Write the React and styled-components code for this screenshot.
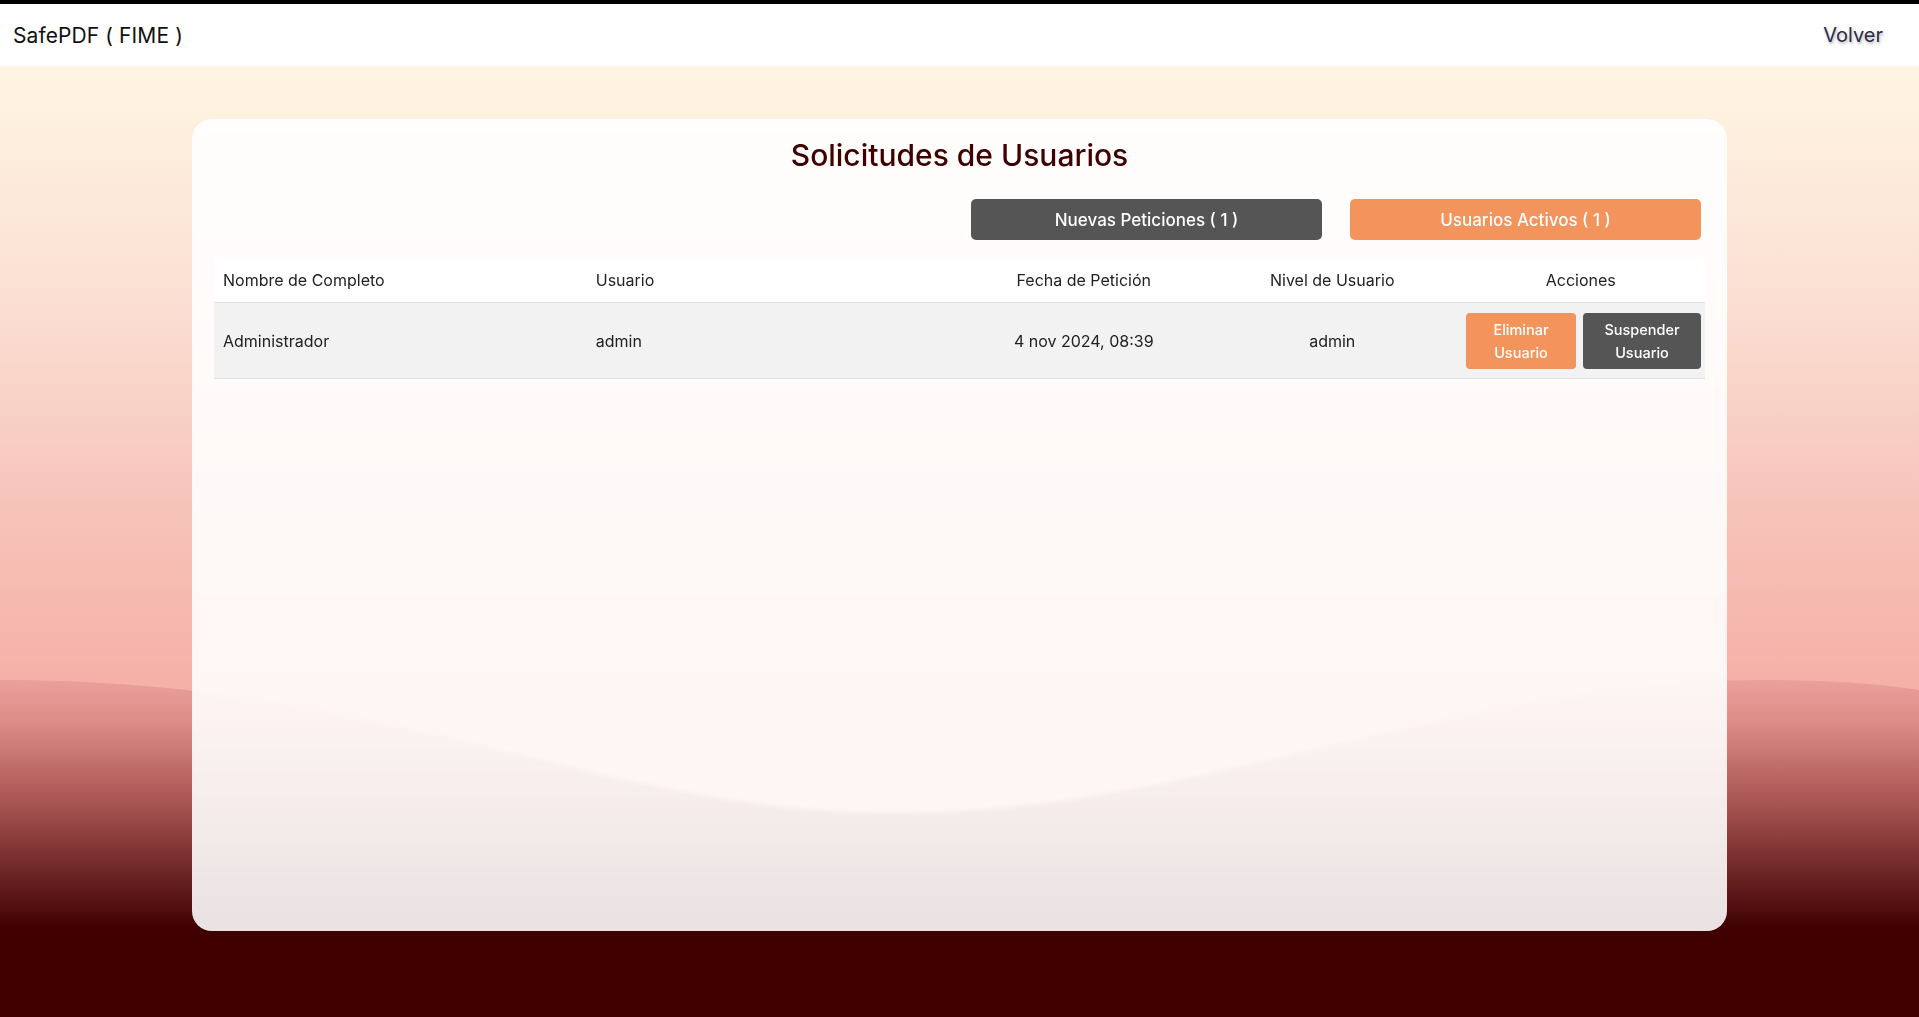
import React from 'react'
import styled, { createGlobalStyle } from 'styled-components'

const GlobalStyle = createGlobalStyle`
  html, body {
    margin: 0;
    padding: 0;
  }
  body {
    font-family: 'Inter', 'Noto Sans', sans-serif;
    border-top: 4px solid #000;
    background: #400000;
  }
  * {
    box-sizing: border-box;
  }
`

const Page = styled.div`
  position: relative;
  min-height: 1013px;
  display: flex;
  flex-direction: column;
  background: linear-gradient(180deg, #fef5e2 62px, #fbdfd2 300px, #f7c4ba 500px, #f5b0a7 680px);
  overflow: hidden;
`

const Wave = styled.svg`
  position: absolute;
  left: 0;
  bottom: 0;
  width: 100%;
  height: 337px;
  display: block;
`

const Navbar = styled.nav`
  position: relative;
  z-index: 2;
  height: 62px;
  background: #fff;
  display: flex;
  align-items: center;
  justify-content: space-between;
  padding: 0 36px 0 13px;
`

const Brand = styled.div`
  font-size: 21px;
  color: #111;
  letter-spacing: 0.1px;
`

const BackLink = styled.a`
  font-size: 20px;
  color: #2d2b4a;
  text-shadow: 1px 2px 3px rgba(0, 0, 0, 0.3);
  cursor: pointer;
`

const Main = styled.main`
  position: relative;
  z-index: 1;
  display: flex;
  justify-content: center;
  padding: 53px 192px 0;
`

const Card = styled.section`
  width: 100%;
  height: 812px;
  border-radius: 20px;
  background: rgba(255, 255, 255, 0.89);
  backdrop-filter: blur(2px);
  padding: 18px 22px;
  display: flex;
  flex-direction: column;
`

const Title = styled.h1`
  margin: 0;
  text-align: center;
  font-size: 30px;
  line-height: 36px;
  font-weight: 500;
  color: #400000;
`

const TabBar = styled.div`
  display: flex;
  justify-content: flex-end;
  gap: 28px;
  margin: 26px 4px 18px 0;
`

const TabButton = styled.button`
  width: 351px;
  height: 41px;
  border: none;
  border-radius: 5px;
  background: ${p => (p.$variant === 'orange' ? '#f2945c' : '#555555')};
  color: #fff;
  font-family: inherit;
  font-size: 17px;
  font-weight: 500;
  cursor: pointer;
`

const Table = styled.div`
  display: grid;
  grid-template-columns: 25% 25% 1fr 1fr 1fr;
`

const HeadCell = styled.div`
  background: #fff;
  height: 45px;
  display: flex;
  align-items: center;
  justify-content: ${p => (p.$center ? 'center' : 'flex-start')};
  padding: 0 9px;
  font-size: 16px;
  color: #222;
  border-bottom: 1px solid #dee2e6;
`

const Cell = styled.div`
  background: #f2f2f2;
  height: 76px;
  display: flex;
  align-items: center;
  justify-content: ${p => (p.$center ? 'center' : 'flex-start')};
  padding: 0 9px;
  font-size: 16px;
  color: #222;
  border-bottom: 1px solid #dee2e6;
`

const Actions = styled(Cell)`
  justify-content: flex-end;
  gap: 7px;
  padding: 0 4px 0 0;
`

const ActionButton = styled.button`
  width: ${p => p.$w}px;
  height: 56px;
  border: none;
  border-radius: 4px;
  background: ${p => (p.$variant === 'orange' ? '#f2945c' : '#555555')};
  color: #fff;
  font-family: inherit;
  font-size: 14.5px;
  font-weight: 500;
  line-height: 23px;
  padding: 0 8px;
  cursor: pointer;
`

const users = [
  { name: 'Administrador', user: 'admin', date: '4 nov 2024, 08:39', level: 'admin' },
]

export default function App() {
  return (
    <>
      <GlobalStyle />
      <Page>
        <Wave viewBox="0 0 1919 337" preserveAspectRatio="none">
          <defs>
            <linearGradient id="waveFill" x1="0" y1="0" x2="0" y2="337" gradientUnits="userSpaceOnUse">
              <stop offset="0" stopColor="#eba09b" />
              <stop offset="0.12" stopColor="#de8d88" />
              <stop offset="0.36" stopColor="#aa5654" />
              <stop offset="0.6" stopColor="#651f1f" />
              <stop offset="0.74" stopColor="#400000" />
              <stop offset="1" stopColor="#400000" />
            </linearGradient>
          </defs>
          <path
            d="M0,0 C400,0 600,133 893,133 C1200,133 1450,0 1760,0 C1830,0 1880,4 1919,10 L1919,337 L0,337 Z"
            fill="url(#waveFill)"
          />
        </Wave>
        <Navbar>
          <Brand>SafePDF ( FIME )</Brand>
          <BackLink>Volver</BackLink>
        </Navbar>
        <Main>
          <Card>
            <Title>Solicitudes de Usuarios</Title>
            <TabBar>
              <TabButton>Nuevas Peticiones ( 1 )</TabButton>
              <TabButton $variant="orange">Usuarios Activos ( 1 )</TabButton>
            </TabBar>
            <Table>
              <HeadCell>Nombre de Completo</HeadCell>
              <HeadCell>Usuario</HeadCell>
              <HeadCell $center>Fecha de Petición</HeadCell>
              <HeadCell $center>Nivel de Usuario</HeadCell>
              <HeadCell $center>Acciones</HeadCell>
              {users.map(u => (
                <React.Fragment key={u.user}>
                  <Cell>{u.name}</Cell>
                  <Cell>{u.user}</Cell>
                  <Cell $center>{u.date}</Cell>
                  <Cell $center>{u.level}</Cell>
                  <Actions>
                    <ActionButton $variant="orange" $w={110}>Eliminar Usuario</ActionButton>
                    <ActionButton $w={118}>Suspender Usuario</ActionButton>
                  </Actions>
                </React.Fragment>
              ))}
            </Table>
          </Card>
        </Main>
      </Page>
    </>
  )
}
